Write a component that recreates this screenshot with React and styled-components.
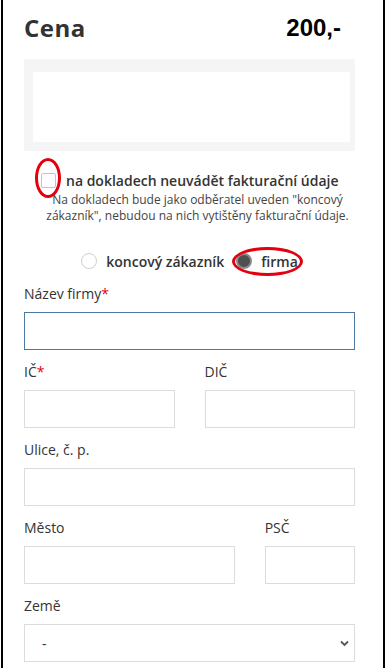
import styled, { createGlobalStyle } from "styled-components";

const GlobalStyle = createGlobalStyle`
  html, body {
    margin: 0;
    padding: 0;
    background: #fff;
  }
  body {
    font-family: "Open Sans", "DejaVu Sans", sans-serif;
    color: #333;
  }
  * {
    box-sizing: border-box;
  }
`;

const Page = styled.div`
  position: relative;
  margin-left: 1px;
  width: 384px;
  min-height: 100vh;
  border-left: 2px solid #000;
  border-right: 2px solid #000;
  padding: 13px 28px 0 21px;
`;

const Header = styled.div`
  display: flex;
  justify-content: space-between;
  align-items: center;
  height: 30px;
  padding-right: 14px;
`;

const Title = styled.h1`
  margin: 0;
  font-size: 24px;
  line-height: 30px;
  font-weight: 700;
  letter-spacing: 0.5px;
  color: #333;
`;

const Price = styled.div`
  font-family: "Liberation Sans", Arial, sans-serif;
  font-size: 24px;
  line-height: 30px;
  font-weight: 700;
  color: #000;
`;

const Box = styled.div`
  margin-top: 16px;
  height: 92px;
  background: #f5f5f5;
  border-radius: 2px;
  padding: 13px 5px 9px 9px;
`;

const BoxInner = styled.div`
  height: 100%;
  background: #fff;
`;

const CheckRow = styled.label`
  display: flex;
  align-items: center;
  gap: 10px;
  margin-top: 19px;
  padding-left: 17px;
  height: 20px;
  font-size: 14px;
  font-weight: 600;
  color: #333;
`;

const Check = styled.span`
  width: 15px;
  height: 15px;
  border: 1px solid #c4c4c4;
  border-radius: 2px;
  background: #fff;
`;

const Note = styled.p`
  margin: 2px 0 0;
  padding-left: 16px;
  text-align: center;
  font-size: 12px;
  line-height: 16px;
  color: #444;
`;

const RadioRow = styled.div`
  display: flex;
  justify-content: center;
  align-items: center;
  margin-top: 27px;
  height: 20px;
  font-size: 14px;
  font-weight: 600;
  color: #333;
`;

const RadioOption = styled.label`
  display: flex;
  align-items: center;
  gap: 9px;
  margin-left: ${(p) => (p.$first ? "0" : "12px")};
`;

const Radio = styled.span`
  width: 16px;
  height: 16px;
  border-radius: 50%;
  border: ${(p) => (p.$checked ? "2px solid #8a8a8a" : "1px solid #cfcfcf")};
  background: ${(p) => (p.$checked ? "#4f4f4f" : "#fff")};
`;

const Fields = styled.div`
  margin-top: 13px;
  display: flex;
  flex-direction: column;
  gap: 12px;
`;

const Row = styled.div`
  display: grid;
  grid-template-columns: ${(p) => p.$cols || "1fr"};
  column-gap: 30px;
`;

const Field = styled.div`
  display: flex;
  flex-direction: column;
  gap: 8px;
`;

const Label = styled.span`
  font-size: 14px;
  line-height: 20px;
  font-weight: 500;
  color: #333;
`;

const Req = styled.span`
  color: #e2001a;
`;

const Input = styled.input`
  height: 38px;
  width: 100%;
  margin: 0;
  border: 1px solid ${(p) => (p.$focused ? "#4c78a3" : "#dcdcdc")};
  border-radius: 0;
  outline: none;
  background: #fff;
  font: inherit;
`;

const SelectWrap = styled.div`
  position: relative;
`;

const Select = styled.select`
  appearance: none;
  width: 100%;
  height: 38px;
  margin: 0;
  padding: 0 0 0 17px;
  border: 1px solid #dcdcdc;
  border-radius: 0;
  background: #fff;
  font-family: "Open Sans", sans-serif;
  font-size: 14px;
  color: #333;
`;

const Chevron = styled.svg`
  position: absolute;
  right: 6px;
  top: 16px;
  width: 9px;
  height: 7px;
  pointer-events: none;
`;

const Oval = styled.span`
  position: absolute;
  left: ${(p) => p.$x}px;
  top: ${(p) => p.$y}px;
  width: ${(p) => p.$w}px;
  height: ${(p) => p.$h}px;
  border: 3px solid #e3000f;
  border-radius: 50%;
  pointer-events: none;
`;

function App() {
  return (
    <>
      <GlobalStyle />
      <Page>
        <Header>
          <Title>Cena</Title>
          <Price>200,-</Price>
        </Header>
        <Box>
          <BoxInner />
        </Box>
        <CheckRow>
          <Check />
          na dokladech neuvádět fakturační údaje
        </CheckRow>
        <Note>
          Na dokladech bude jako odběratel uveden "koncový
          <br />
          zákazník", nebudou na nich vytištěny fakturační údaje.
        </Note>
        <RadioRow>
          <RadioOption $first>
            <Radio />
            koncový zákazník
          </RadioOption>
          <RadioOption>
            <Radio $checked />
            firma
          </RadioOption>
        </RadioRow>
        <Fields>
          <Field>
            <Label>
              Název firmy<Req>*</Req>
            </Label>
            <Input $focused />
          </Field>
          <Row $cols="1fr 1fr">
            <Field>
              <Label>
                IČ<Req>*</Req>
              </Label>
              <Input />
            </Field>
            <Field>
              <Label>DIČ</Label>
              <Input />
            </Field>
          </Row>
          <Field>
            <Label>Ulice, č. p.</Label>
            <Input />
          </Field>
          <Row $cols="7fr 3fr">
            <Field>
              <Label>Město</Label>
              <Input />
            </Field>
            <Field>
              <Label>PSČ</Label>
              <Input />
            </Field>
          </Row>
          <Field>
            <Label>Země</Label>
            <SelectWrap>
              <Select defaultValue="-">
                <option value="-">-</option>
              </Select>
              <Chevron viewBox="0 0 9 7">
                <path d="M1 1.5 L4.5 5 L8 1.5" fill="none" stroke="#555" strokeWidth="1.8" />
              </Chevron>
            </SelectWrap>
          </Field>
        </Fields>
        <Oval $x={32} $y={158} $w={26} $h={40} />
        <Oval $x={229} $y={247} $w={71} $h={29} />
      </Page>
    </>
  );
}

export default App;
